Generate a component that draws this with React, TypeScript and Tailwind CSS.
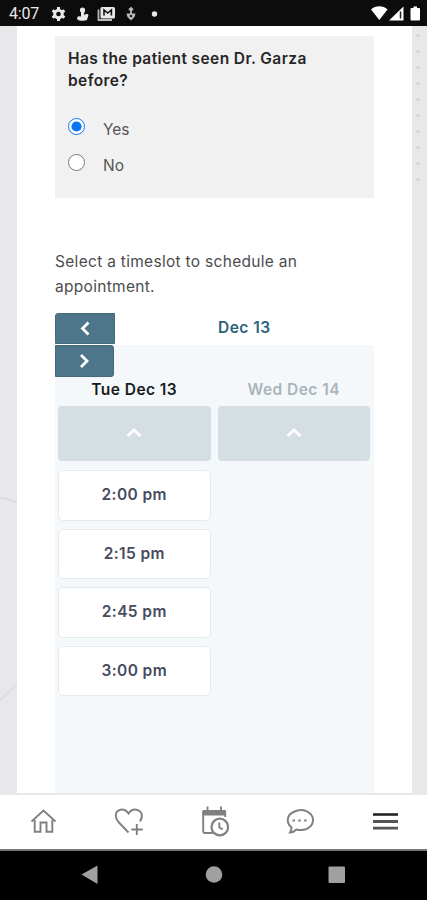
import { useState } from "react";

const slots = ["2:00 pm", "2:15 pm", "2:45 pm", "3:00 pm"];

function StatusBar() {
  return (
    <header className="flex h-[26px] shrink-0 items-center bg-[#0c0c0c] pt-px text-[#e8e8e8]">
      <span className="ml-[9px] w-[42px] pt-[1px] font-[Roboto] text-[16px] leading-none tracking-[-0.2px]">
        4:07
      </span>
      <svg width="112" height="18" viewBox="51 5 112 18" fill="currentColor">
        <circle cx="58.5" cy="14" r="3.8" fill="none" stroke="currentColor" strokeWidth="3" />
        <path
          d="M58.500 7v3M58.500 18v3M52.440 10.500l2.600 1.500M61.960 16l2.600 1.500M64.560 10.500l-2.600 1.500M55.040 16l-2.600 1.500"
          stroke="currentColor"
          strokeWidth="3"
        />
        <circle cx="82.500" cy="10" r="2.600" />
        <path d="M81 11h3.500l-.5 4 3-1.200 1.500 1.200-1.500 4.700c-1.500 1.400-7.500 1.400-9 .3-1.600-1.400-.8-3.500.7-3.700l2.300.2z" />
        <path d="M98.500 9.500v10.500h13.500" fill="none" stroke="#bbb" strokeWidth="1.800" />
        <rect x="100.500" y="7" width="14.500" height="11.500" rx="1.500" />
        <path d="M104 15.500V10l3.700 3 3.700-3v5.500" fill="none" stroke="#111" strokeWidth="1.600" />
        <path d="M131 8v7M129 10l2-2 2 2" fill="none" stroke="#bbb" strokeWidth="1.800" />
        <path d="M126.500 13.500h9l-1 3.500-3.500 3.500-3.500-3.500z" fill="#bbb" />
        <circle cx="131" cy="16" r="1.300" fill="#222" />
        <circle cx="154.500" cy="14" r="2.700" />
      </svg>
      <svg className="mr-[6px] ml-auto" width="52" height="18" viewBox="369 5 52 18" fill="#fff">
        <path d="M371 9.500c4.500-4.200 12-4.200 16.500 0L379.300 20z" />
        <path d="M389 20.500 403.500 6.500v14z" />
        <path d="M400.500 11.500v7" stroke="#222" strokeWidth="1.500" />
        <path d="M411.500 8h2V6.500h3.500V8h2q1 0 1 1v10.500q0 1-1 1h-7.500q-1 0-1-1V9q0-1 1-1z" />
      </svg>
    </header>
  );
}

function Chevron({ d }: { d: string }) {
  return (
    <svg width="16" height="16" viewBox="0 0 16 16" fill="none" stroke="#fff" strokeWidth="2.800">
      <path d={d} />
    </svg>
  );
}

function Question() {
  const [seen, setSeen] = useState("Yes");

  return (
    <fieldset className="h-[162px] bg-[#f1f1f1] pt-[12px] pl-[13px]">
      <legend className="float-left w-[260px] text-[15.500px] leading-[21.500px] font-semibold tracking-[0.400px] text-[#262626]">
        Has the patient seen Dr. Garza before?
      </legend>
      <div className="clear-both flex flex-col gap-[13px] pt-[27px]">
        {["Yes", "No"].map((option) => (
          <label key={option} className="flex h-[23px] items-start text-[15.500px] text-[#555]">
            <input
              type="radio"
              name="seen"
              className="m-0 size-[17px] accent-[#0875f5]"
              checked={seen === option}
              onChange={() => setSeen(option)}
            />
            <span className="ml-[18px] leading-[23px]">{option}</span>
          </label>
        ))}
      </div>
    </fieldset>
  );
}

function Schedule() {
  return (
    <section>
      <p className="mt-[52px] mb-[14px] w-[270px] text-[15.500px] leading-[24.500px] tracking-[0.300px] text-[#4d4d4d]">
        Select a timeslot to schedule an appointment.
      </p>
      <div className="flex h-[32px]">
        <button
          className="flex h-[31px] w-[60px] items-center justify-center rounded-tl-[3px] border border-[#47697c] bg-[#4e768b]"
          aria-label="Previous"
        >
          <Chevron d="M11.500 1.500 5.500 7.500l6 6" />
        </button>
        <h2 className="ml-[103px] text-[15.500px] leading-[30px] font-semibold tracking-[0.500px] text-[#2b617b]">
          Dec 13
        </h2>
      </div>
      <div className="h-[450px] bg-[#f4f8fb]">
        <button
          className="flex h-[32px] w-[59px] items-center justify-center rounded-r-[3px] border border-[#47697c] bg-[#4e768b]"
          aria-label="Next"
        >
          <Chevron d="M4 2l6 6-6 6" />
        </button>
        <div className="grid grid-cols-2 gap-[7px] pr-[4px] pl-[3px]">
          <div>
            <h3 className="h-[29px] text-center text-[15.500px] leading-[26px] font-semibold tracking-[0.450px] text-[#171a1d]">
              Tue Dec 13
            </h3>
            <div className="flex h-[55px] items-center justify-center rounded-[4px] bg-[#d5dfe3]">
              <Chevron d="M1.500 10 8 4l6.500 6" />
            </div>
            <div className="mt-[9px] flex flex-col gap-[8px]">
              {slots.map((slot) => (
                <button
                  key={slot}
                  className="h-[50.600px] rounded-[5px] border border-[#e4ebee] bg-white pb-px text-[15.500px] font-semibold tracking-[0.400px] text-[#474b60]"
                >
                  {slot}
                </button>
              ))}
            </div>
          </div>
          <div>
            <h3 className="h-[29px] text-center text-[15.500px] leading-[26px] font-semibold tracking-[0.450px] text-[#a9b5b9]">
              Wed Dec 14
            </h3>
            <div className="flex h-[55px] items-center justify-center rounded-[4px] bg-[#d5dfe3]">
              <Chevron d="M1.500 10 8 4l6.500 6" />
            </div>
          </div>
        </div>
      </div>
    </section>
  );
}

function TabBar() {
  return (
    <nav className="flex h-[56px] shrink-0 items-center border-t-2 border-[#e7e8e9] bg-white text-[#808080]">
      <svg width="427" height="54" viewBox="0 795 427 54" fill="none" stroke="currentColor" strokeWidth="1.900">
        <path d="M31.500 821.500 43.500 810.500 55.500 821.500M34.700 820v11.700h5.800v-9.200h6v9.200h5.800V820" />
        <path d="M128.500 832.500 118.500 822c-4.500-5.500-3-11.300 2-12.300 4-.8 6.300 1.300 8 3.800 1.700-2.500 4-4.600 8-3.800 5.500 1 7 6.800 3.500 11.800M136.800 824v11M131.300 829.500h11.500" />
        <path d="M203.200 811v20.500q0 1.500 1.500 1.500h8M225.200 811v6" />
        <path d="M203.500 810h21.500q1 0 1 1v4.500h-23.500V811q0-1 1-1z" fill="currentColor" stroke="none" />
        <path d="M207.500 806.500v5M221 806.500v5" />
        <circle cx="219.800" cy="827" r="8.300" fill="#fff" strokeWidth="2.200" />
        <path d="M219.300 822.500v5l3.500 1.800" />
        <path
          d="M291.500 827.500c-5.500-4.500-5-12.500 2-15.500 9.500-5 19.500 .5 19.500 8 0 7.500-8.500 11.500-16.500 9.500-1.500 1.500-4 3-6.500 3 1-1.500 1.500-3 1.500-5z"
          strokeWidth="2"
        />
        <path d="M292.500 820.500h2.500m3.300 0h2.500m3.300 0h2.500" strokeWidth="2.200" />
        <path d="M373 814.500h25" stroke="#222" strokeWidth="2.600" />
        <path d="M373 821.500h25M373 828.200h25" stroke="#555" strokeWidth="2.800" />
      </svg>
    </nav>
  );
}

export default function App() {
  return (
    <div className="flex h-[900px] w-[427px] flex-col overflow-hidden bg-[#e8e8ea] font-[Inter,sans-serif]">
      <StatusBar />
      <div className="flex min-h-0 flex-1">
        <div className="w-[17px] shrink-0">
          <svg width="17" height="767" viewBox="0 26 17 767" fill="none" stroke="#dcdcde" strokeWidth="2">
            <path d="M0 498q8 0 17 5M0 700l17-16" />
          </svg>
        </div>
        <main className="w-[395px] shrink-0 bg-white pt-[10px] pr-[38px] pl-[38px]">
          <Question />
          <Schedule />
        </main>
        <div className="flex flex-1 flex-col items-center gap-[13px] pt-[8px] pr-[3px]">
          {Array.from({ length: 10 }, (_, i) => (
            <span key={i} className="h-[3px] w-[4px] rounded-full bg-[#d8d8db]" />
          ))}
        </div>
      </div>
      <TabBar />
      <footer className="flex h-[51px] shrink-0 items-center border-t-2 border-[#777] bg-black">
        <svg width="427" height="49" viewBox="0 851 427 49" fill="#a0a0a0">
          <path d="M81.500 874.500 97.500 865.500v18.500z" />
          <circle cx="214" cy="874.500" r="8.300" />
          <rect x="328.500" y="866.500" width="16.500" height="16.500" rx="1" />
        </svg>
      </footer>
    </div>
  );
}
